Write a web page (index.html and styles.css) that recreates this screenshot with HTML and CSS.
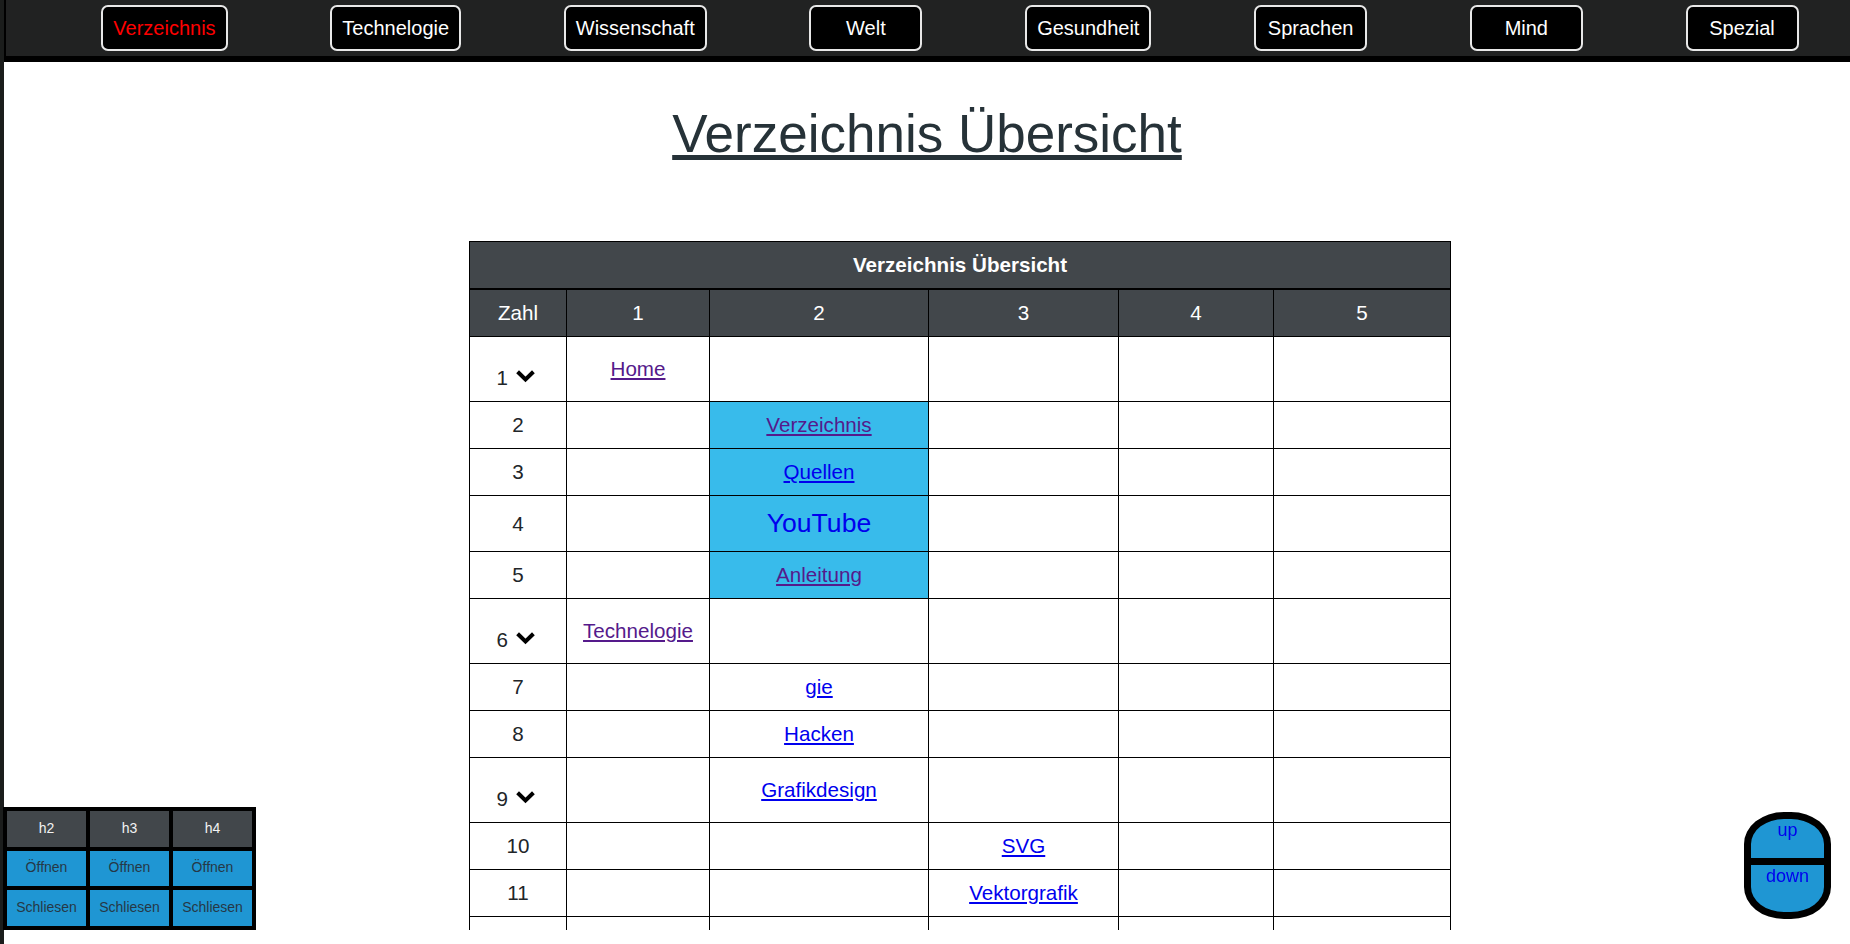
FILE: index.html
```html
<!DOCTYPE html>
<html lang="de">
<head>
<meta charset="utf-8">
<title>Verzeichnis Übersicht</title>
<link rel="stylesheet" href="styles.css">
</head>
<body>
<nav class="topnav">
  <a class="navbtn active" href="#">Verzeichnis</a>
  <a class="navbtn" href="#">Technelogie</a>
  <a class="navbtn" href="#">Wissenschaft</a>
  <a class="navbtn" href="#">Welt</a>
  <a class="navbtn" href="#">Gesundheit</a>
  <a class="navbtn" href="#">Sprachen</a>
  <a class="navbtn" href="#">Mind</a>
  <a class="navbtn" href="#">Spezial</a>
</nav>
<div class="page">
  <main class="scroll">
    <h1 class="title">Verzeichnis Übersicht</h1>
    <table class="dir">
      <colgroup>
        <col class="w0"><col class="w1"><col class="w2"><col class="w3"><col class="w4"><col class="w5">
      </colgroup>
      <thead>
        <tr><th colspan="6" class="cap">Verzeichnis Übersicht</th></tr>
        <tr class="cols"><th>Zahl</th><th>1</th><th>2</th><th>3</th><th>4</th><th>5</th></tr>
      </thead>
      <tbody>
        <tr><td>1 <span class="tog"><svg width="21" height="14" viewBox="0 0 21 14"><path d="M2.6 2.8 L10.5 10.4 L18.4 2.8" fill="none" stroke="#000" stroke-width="4"/></svg></span></td><td><a class="v" href="#">Home</a></td><td></td><td></td><td></td><td></td></tr>
        <tr><td>2</td><td></td><td class="hl"><a class="v" href="#">Verzeichnis</a></td><td></td><td></td><td></td></tr>
        <tr><td>3</td><td></td><td class="hl"><a class="n" href="#">Quellen</a></td><td></td><td></td><td></td></tr>
        <tr><td>4</td><td></td><td class="hl"><a class="n big" href="#">YouTube</a></td><td></td><td></td><td></td></tr>
        <tr><td>5</td><td></td><td class="hl"><a class="v" href="#">Anleitung</a></td><td></td><td></td><td></td></tr>
        <tr><td>6 <span class="tog"><svg width="21" height="14" viewBox="0 0 21 14"><path d="M2.6 2.8 L10.5 10.4 L18.4 2.8" fill="none" stroke="#000" stroke-width="4"/></svg></span></td><td><a class="v" href="#">Technelogie</a></td><td></td><td></td><td></td><td></td></tr>
        <tr><td>7</td><td></td><td><a class="n" href="#">gie</a></td><td></td><td></td><td></td></tr>
        <tr><td>8</td><td></td><td><a class="n" href="#">Hacken</a></td><td></td><td></td><td></td></tr>
        <tr><td>9 <span class="tog"><svg width="21" height="14" viewBox="0 0 21 14"><path d="M2.6 2.8 L10.5 10.4 L18.4 2.8" fill="none" stroke="#000" stroke-width="4"/></svg></span></td><td></td><td><a class="n" href="#">Grafikdesign</a></td><td></td><td></td><td></td></tr>
        <tr><td>10</td><td></td><td></td><td><a class="n" href="#">SVG</a></td><td></td><td></td></tr>
        <tr><td>11</td><td></td><td></td><td><a class="n" href="#">Vektorgrafik</a></td><td></td><td></td></tr>
        <tr class="blank"><td></td><td></td><td></td><td></td><td></td><td></td></tr>
        <tr class="blank"><td></td><td></td><td></td><td></td><td></td><td></td></tr>
      </tbody>
    </table>
  </main>
</div>

<div class="hpanel">
  <div class="hcell head">h2</div>
  <div class="hcell head">h3</div>
  <div class="hcell head">h4</div>
  <div class="hcell btn">Öffnen</div>
  <div class="hcell btn">Öffnen</div>
  <div class="hcell btn">Öffnen</div>
  <div class="hcell btn">Schliesen</div>
  <div class="hcell btn">Schliesen</div>
  <div class="hcell btn">Schliesen</div>
</div>

<div class="updown">
  <a class="ud up" href="#">up</a>
  <a class="ud down" href="#">down</a>
</div>
</body>
</html>
```

FILE: styles.css
```css
html, body {
  margin: 0;
  padding: 0;
}
body {
  background: #1b1d1c;
  font-family: "Liberation Sans", Arial, sans-serif;
  height: 944px;
  overflow: hidden;
}

.topnav {
  margin-left: 4px;
  height: 56px;
  background: #212222;
  border-left: 2px solid #000;
  border-bottom: 6px solid #000;
  display: flex;
  align-items: center;
  justify-content: space-around;
  padding-left: 44px;
}
.navbtn {
  box-sizing: border-box;
  min-width: 113px;
  height: 46px;
  padding: 0 10px;
  display: flex;
  align-items: center;
  justify-content: center;
  background: #000;
  border: 2px solid #e8e8e8;
  border-radius: 7px;
  color: #fff;
  font-size: 20px;
  text-decoration: none;
}
.navbtn.active {
  color: #ff0000;
}

.page {
  margin-left: 4px;
  background: #fff;
  height: 882px;
}
.scroll {
  display: block;
  height: 868px;
  overflow: hidden;
}

.title {
  margin: 41px 0 0;
  font-size: 53px;
  font-weight: normal;
  line-height: normal;
  text-align: center;
  color: #263238;
  text-decoration: underline;
}

.dir {
  margin: 77px 0 0 465px;
  width: 981px;
  table-layout: fixed;
  border-collapse: collapse;
  font-size: 20.6px;
  line-height: 30px;
  color: #212529;
}
.w0 { width: 97px; }
.w1 { width: 143px; }
.w2 { width: 219px; }
.w3 { width: 190px; }
.w4 { width: 155px; }
.w5 { width: 177px; }

.dir th,
.dir td {
  border: 1px solid #000;
  padding: 8px;
  text-align: center;
  vertical-align: middle;
}
.dir th {
  background: #42474b;
  color: #fff;
  font-weight: normal;
}
.dir th.cap {
  font-weight: bold;
  border-bottom: 2px solid #000;
}
.dir td.hl {
  background: #38bbeb;
}
.dir tr.blank td {
  height: 30px;
}
.dir a.v { color: #551a8b; }
.dir a.n { color: #0000ee; }
.dir a.big {
  font-size: 26.6px;
  line-height: 39px;
  text-decoration: none;
}

.tog {
  display: inline-block;
  width: 25px;
  height: 40px;
  margin-left: 1px;
  vertical-align: baseline;
}
.tog svg {
  display: block;
  margin-top: 24px;
}

.hpanel {
  position: fixed;
  left: 3px;
  bottom: 14px;
  background: #000;
  padding: 4px;
  display: grid;
  grid-template-columns: 79px 79px 79px;
  grid-template-rows: 36px 35px 36px;
  gap: 4px;
  font-size: 14px;
}
.hcell {
  display: flex;
  align-items: center;
  justify-content: center;
  padding-bottom: 3px;
}
.hcell.head {
  background: #42474b;
  color: #f2f2f2;
}
.hcell.btn {
  background: #1f96d3;
  color: #263846;
}

.updown {
  position: fixed;
  right: 19px;
  bottom: 25px;
  box-sizing: border-box;
  width: 87px;
  height: 107px;
  border: 7px solid #000;
  border-radius: 40px / 32px;
  background: #1f96d3;
  overflow: hidden;
  display: flex;
  flex-direction: column;
}
.ud {
  display: block;
  padding-top: 1px;
  text-align: center;
  color: #0000ee;
  font-size: 18px;
  text-decoration: none;
}
.ud.up {
  height: 38px;
  border-bottom: 7px solid #000;
}
.ud.down {
  flex: 1;
}
```
